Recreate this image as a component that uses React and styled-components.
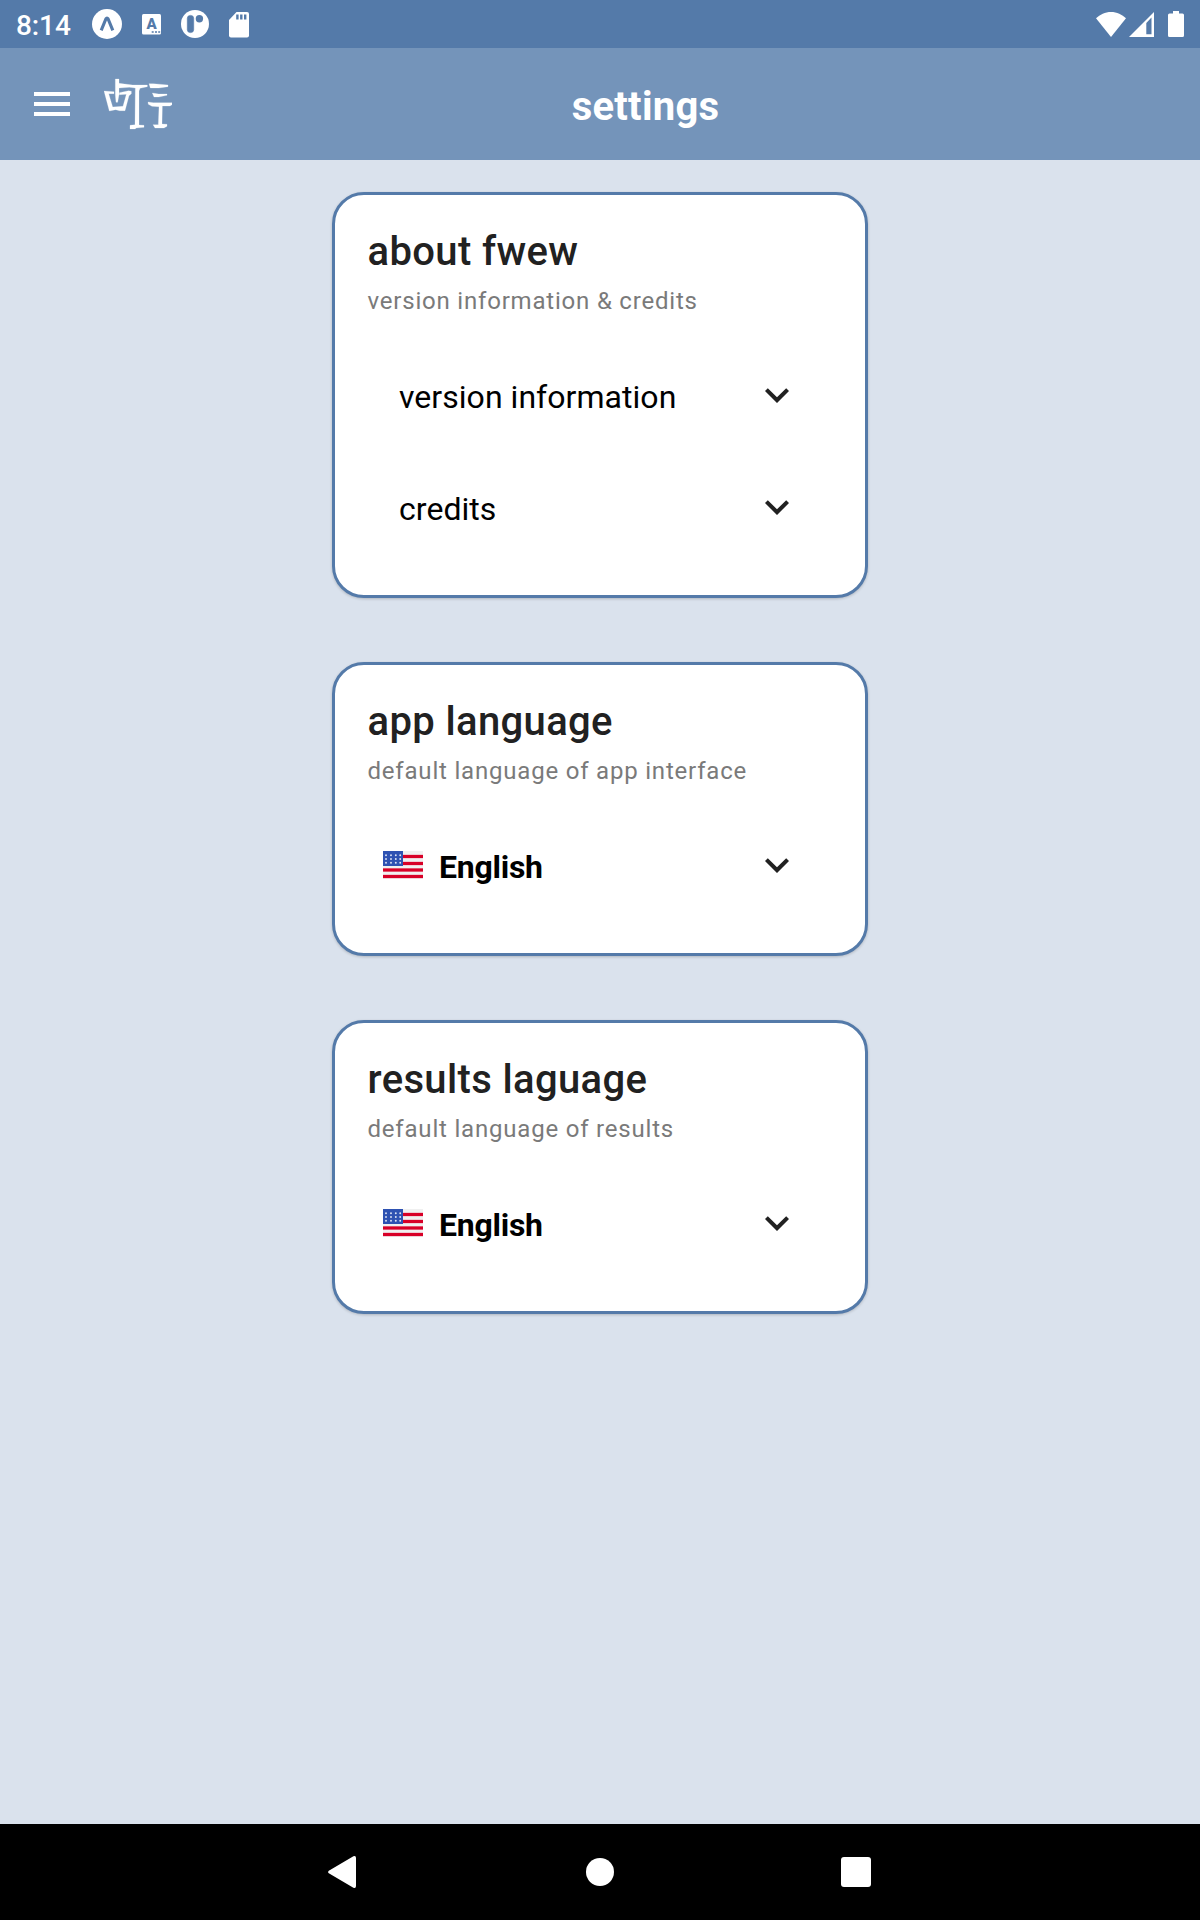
import React from "react";
import styled, { createGlobalStyle } from "styled-components";

const GlobalStyle = createGlobalStyle`
  * { box-sizing: border-box; }
  body {
    margin: 0;
    background: #dae2ed;
    font-family: Roboto, "Liberation Sans", sans-serif;
  }
`;

const Screen = styled.div`
  display: flex;
  flex-direction: column;
  width: 1200px;
  height: 1920px;
  background: #dae2ed;
`;

const StatusBar = styled.div`
  display: flex;
  justify-content: space-between;
  height: 48px;
  background: #547aa9;
`;

const StatusGroup = styled.div`
  display: flex;
  align-items: center;
  padding: ${(p) => p.$pad};
`;

const Clock = styled.span`
  width: 75px;
  font-size: 28px;
  font-weight: 500;
  line-height: 48px;
  letter-spacing: -0.1px;
  color: #fff;
  padding-top: 3px;
`;

const Header = styled.header`
  display: flex;
  align-items: center;
  height: 112px;
  padding: 0 81px 0 34px;
  background: #7494ba;
`;

const MenuButton = styled.button`
  display: flex;
  flex-direction: column;
  gap: 6px;
  width: 36px;
  margin-right: 34px;
  padding: 0;
  border: 0;
  background: none;
`;

const MenuLine = styled.span`
  height: 4px;
  background: #fff;
`;

const HeaderTitle = styled.h1`
  flex: 1;
  margin: 0;
  padding-top: 6px;
  text-align: center;
  font-size: 40px;
  font-weight: 700;
  line-height: 48px;
  letter-spacing: 0.25px;
  color: #fff;
`;

const Content = styled.main`
  flex: 1;
  display: flex;
  flex-direction: column;
  align-items: center;
  gap: 64px;
  padding-top: 32px;
`;

const CardBox = styled.section`
  width: 536px;
  padding: 0 32px 32px;
  border: 3px solid #547aa9;
  border-radius: 32px;
  background: #fff;
  box-shadow: 0 1px 3px rgba(0, 0, 0, 0.2);
`;

const CardHead = styled.div`
  display: flex;
  flex-direction: column;
  height: 144px;
  padding: 27px 0 0 0.5px;
`;

const CardTitle = styled.h2`
  margin: 0;
  font-size: 40px;
  font-weight: 500;
  line-height: 60px;
  letter-spacing: 0.36px;
  color: #212121;
`;

const CardSubtitle = styled.p`
  margin: -1px 0 0;
  font-size: 24px;
  line-height: 40px;
  letter-spacing: 0.8px;
  color: #7a7a7a;
`;

const Row = styled.div`
  display: flex;
  align-items: center;
  height: 112px;
  padding: 0 32px 0 ${(p) => (p.$flag ? 16 : 32)}px;
`;

const RowLabel = styled.span`
  flex: 1;
  padding-top: 3px;
  margin-left: ${(p) => (p.$bold ? 16 : 0)}px;
  font-size: 32px;
  font-weight: ${(p) => (p.$bold ? 700 : 400)};
  line-height: 40px;
  letter-spacing: ${(p) => (p.$bold ? "-0.25px" : "0.04px")};
  color: #000;
`;

const NavBar = styled.nav`
  display: grid;
  grid-template-columns: repeat(3, 256px);
  justify-content: center;
  align-items: center;
  justify-items: center;
  height: 96px;
  background: #000;
`;

const ExpoIcon = () => (
  <svg width="30" height="30" viewBox="0 0 30 30">
    <circle cx="15" cy="15" r="15" fill="#fff" />
    <path d="M9.200 21.400 13.900 9.900Q15 8 16.100 9.900L20.800 21.400" fill="none" stroke="#547aa9" strokeWidth="3.1" />
  </svg>
);

const KeyboardIcon = () => (
  <svg width="19" height="21" viewBox="0 0 19 21">
    <rect width="19" height="20.5" rx="1.5" fill="#fff" />
    <text x="9.5" y="15.3" textAnchor="middle" fontFamily="Roboto" fontWeight="900" fontSize="15" fill="#547aa9">A</text>
    <path d="M9.7 18h2M13 18h2M16.2 18h2" stroke="#547aa9" strokeWidth="1.6" />
  </svg>
);

const PillIcon = () => (
  <svg width="28" height="28" viewBox="0 0 28 28">
    <circle cx="14" cy="14" r="14" fill="#fff" />
    <rect x="6.3" y="5.4" width="6.4" height="17.2" rx="3" fill="#547aa9" stroke="#547aa9" strokeWidth="0.6" />
    <circle cx="18.4" cy="8.8" r="3.7" fill="#547aa9" />
  </svg>
);

const SdIcon = () => (
  <svg width="20" height="26" viewBox="0 0 20 26">
    <path d="M7.5 0H18a2 2 0 0 1 2 2v21.5a2 2 0 0 1-2 2H2a2 2 0 0 1-2-2V8Z" fill="#fff" />
    <path d="M8.4 2.5v5M12.3 2.5v5M16.2 2.5v5" stroke="#547aa9" strokeWidth="2.4" />
  </svg>
);

const WifiIcon = () => (
  <svg width="30" height="25" viewBox="0 0 30 25">
    <path d="M15 25 0 6.3C4 2.5 9 0 15 0s11 2.5 15 6.3Z" fill="#fff" />
  </svg>
);

const SignalIcon = () => (
  <svg width="25" height="25" viewBox="0 0 25 25">
    <path d="M25 0v25H0Z" fill="#fff" />
    <path d="M17.3 11 22.5 5.5v16.7h-5.2Z" fill="#547aa9" />
  </svg>
);

const BatteryIcon = () => (
  <svg width="16" height="26" viewBox="0 0 16 26">
    <path d="M5 0h6v2.4h3.5a1.5 1.5 0 0 1 1.5 1.5v20.6a1.5 1.5 0 0 1-1.5 1.5h-13a1.5 1.5 0 0 1-1.5-1.5V3.9a1.5 1.5 0 0 1 1.5-1.5H5Z" fill="#fff" />
  </svg>
);

const Logo = () => (
  <svg width="68" height="52" viewBox="42 24 204 156" fill="#fff" stroke="#fff" strokeWidth="0.7">
    <path d="M76 27H87V40L104 42 128 45H172V50L150 55 147 63V165L162 166V172L138 174 136 177H120V166L135 164 136 54 118 52 87 54V74L83 97H78L76 74Z" />
    <path fillRule="evenodd" d="M42 63 72 65V71H56L68 111 99 109 109 73 88 74V68L116 62 124 64V71L117 77 105 122H89L77 119 58 123Z" />
    <path d="M177 41H190L234 45V50L206 54H181Z" />
    <path d="M187 69 206 72H231V76L206 81H192Z" />
    <path d="M174 96 190 98H246V104L240 108H217L216 162L231 163V169L222 174H195L189 164H205L207 110 186 109 175 103Z" />
  </svg>
);

const Chevron = () => (
  <svg width="48" height="48" viewBox="0 0 24 24">
    <path d="M7.41 8.58 12 13.17l4.59-4.59L18 10l-6 6-6-6 1.41-1.42Z" fill="#212121" />
  </svg>
);

const starColumns = [3, 8, 12.8, 17.2];
const starRows = [4.3, 8, 11.7];

const Flag = () => (
  <svg width="40" height="28" viewBox="0 0 40 28">
    <rect width="40" height="28" fill="#f0f0f0" />
    {[4, 11, 17.5, 24].map((y) => (
      <g key={y}>
        <rect y={y - 0.5} width="40" height="3.9" fill="#eba6b4" />
        <rect y={y} width="40" height="3" fill="#d80027" />
      </g>
    ))}
    <rect width="20" height="15" fill="#2e52b2" />
    {starRows.map((y) =>
      starColumns.map((x) => (
        <circle key={`${x}-${y}`} cx={x} cy={y} r="0.95" fill="#dfe5f5" />
      ))
    )}
  </svg>
);

const BackSvg = styled.svg`
  margin-right: 4px;
`;

const BackIcon = () => (
  <BackSvg width="28" height="32" viewBox="0 0 28 32">
    <path d="M.8 14.7 25.4.3Q28-.6 28 2v28q0 2.600-2.600 1.700L.8 17.300q-1.400-1.300 0-2.600Z" fill="#fff" />
  </BackSvg>
);

const HomeIcon = () => (
  <svg width="28" height="28" viewBox="0 0 28 28">
    <circle cx="14" cy="14" r="14" fill="#fff" />
  </svg>
);

const RecentsIcon = () => (
  <svg width="30" height="30" viewBox="0 0 30 30">
    <rect width="30" height="30" rx="3" fill="#fff" />
  </svg>
);

const StatusIcon = styled.span`
  display: flex;
  margin-left: ${(p) => p.$gap || 0}px;
  margin-top: ${(p) => p.$drop || 0}px;
`;

function Card({ title, subtitle, children }) {
  return (
    <CardBox>
      <CardHead>
        <CardTitle>{title}</CardTitle>
        <CardSubtitle>{subtitle}</CardSubtitle>
      </CardHead>
      {children}
    </CardBox>
  );
}

function LanguageRow() {
  return (
    <Row $flag>
      <Flag />
      <RowLabel $bold>English</RowLabel>
      <Chevron />
    </Row>
  );
}

export default function App() {
  return (
    <Screen>
      <GlobalStyle />
      <StatusBar>
        <StatusGroup $pad="0 0 0 16px">
          <Clock>8:14</Clock>
          <StatusIcon $gap={1}><ExpoIcon /></StatusIcon>
          <StatusIcon $gap={19.5}><KeyboardIcon /></StatusIcon>
          <StatusIcon $gap={20.5}><PillIcon /></StatusIcon>
          <StatusIcon $gap={20} $drop={1}><SdIcon /></StatusIcon>
        </StatusGroup>
        <StatusGroup $pad="0 16px 0 0">
          <StatusIcon><WifiIcon /></StatusIcon>
          <StatusIcon $gap={3} $drop={1}><SignalIcon /></StatusIcon>
          <StatusIcon $gap={14}><BatteryIcon /></StatusIcon>
        </StatusGroup>
      </StatusBar>
      <Header>
        <MenuButton aria-label="menu">
          <MenuLine />
          <MenuLine />
          <MenuLine />
        </MenuButton>
        <Logo />
        <HeaderTitle>settings</HeaderTitle>
      </Header>
      <Content>
        <Card title="about fwew" subtitle="version information & credits">
          <Row>
            <RowLabel>version information</RowLabel>
            <Chevron />
          </Row>
          <Row>
            <RowLabel>credits</RowLabel>
            <Chevron />
          </Row>
        </Card>
        <Card title="app language" subtitle="default language of app interface">
          <LanguageRow />
        </Card>
        <Card title="results laguage" subtitle="default language of results">
          <LanguageRow />
        </Card>
      </Content>
      <NavBar>
        <BackIcon />
        <HomeIcon />
        <RecentsIcon />
      </NavBar>
    </Screen>
  );
}
